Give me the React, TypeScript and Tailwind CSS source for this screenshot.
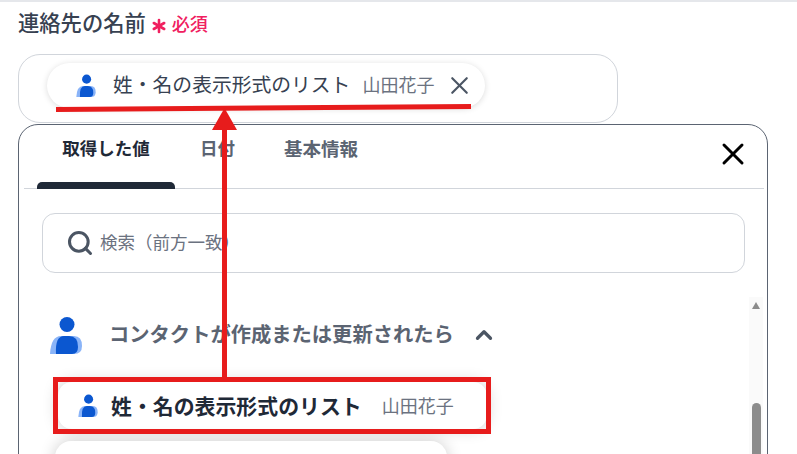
import { X, Search, ChevronUp, Asterisk } from "lucide-react";

function PersonIcon({ className }: { className: string }) {
  return (
    <svg viewBox="0 0 32 38" className={className}>
      <circle cx="17" cy="8.5" r="7.5" fill="#0b57d0" />
      <path d="M0 38 Q1 20 11 20 H24 Q32 20 32 30 Q32 38 24 38 Z" fill="#8ab4f8" />
      <path d="M6 38 Q5 20 14 20 H19 Q28 20 28 31 Q28 38 22 38 Z" fill="#0b57d0" />
    </svg>
  );
}

export default function App() {
  return (
    <div className="relative h-[454px] w-[797px] overflow-hidden border-t-2 border-[#e5e7eb] bg-white font-['Liberation_Sans','Noto_Sans_CJK_JP',sans-serif] text-[#374151]">
      <div className="flex h-[45px] items-center pl-[18px]">
        <span className="text-[21.3px] font-medium leading-none">連絡先の名前</span>
        <Asterisk className="ml-[1px] mt-[3px] h-[24px] w-[24px] text-[#f0205f]" strokeWidth={2.6} />
        <span className="ml-[1px] text-[18px] font-medium leading-none text-[#f0205f]">必須</span>
      </div>

      <div className="ml-[18px] mt-[7px] flex h-[69px] w-[600px] items-start rounded-[22px] border border-[#d1d5db] pl-[28px] pt-2">
        <div className="flex h-[45px] w-[438px] items-center rounded-full bg-white pl-[29px] shadow-[0_1px_6px_rgba(0,0,0,0.14)]">
          <PersonIcon className="h-[23px] w-[20px]" />
          <span className="ml-[17px] text-[19.8px] leading-none">姓・名の表示形式のリスト</span>
          <span className="ml-3 text-[18px] leading-none text-[#6b7280]">山田花子</span>
          <X className="ml-[11px] h-[29px] w-[29px] text-[#4b5563]" strokeWidth={1.8} />
        </div>
      </div>

      <div className="ml-[18px] mt-px h-[400px] w-[750px] rounded-t-[20px] border border-[#5b6472] pl-[5px] pr-[3px]">
        <div className="flex h-[64px] items-start justify-between border-b border-[#d1d5db] pr-[13px]">
          <div className="flex">
            <div className="ml-[13px] flex h-[64px] w-[138px] flex-col items-center justify-between">
              <span className="mt-[16px] text-[17.5px] font-bold leading-none text-[#1f2937]">取得した値</span>
              <span className="h-[7px] w-full rounded-t-[5px] bg-[#1f2937]" />
            </div>
            <span className="ml-[25px] mt-[16px] text-[17.5px] font-bold leading-none text-[#5b6472]">日付</span>
            <span className="ml-[49px] mt-[16px] text-[18.5px] font-bold leading-none text-[#5b6472]">基本情報</span>
          </div>
          <X className="mt-[11px] h-[36px] w-[36px] text-black" strokeWidth={2} />
        </div>

        <div className="ml-[18px] mt-[24px] flex h-[60px] w-[703px] items-center rounded-[13px] border border-[#d1d5db] pl-[23px]">
          <Search className="h-[28px] w-[28px] text-[#4b5563]" strokeWidth={2.6} />
          <span className="ml-[6px] mt-[2px] text-[17.5px] leading-none text-[#6b7280]">検索（前方一致）</span>
        </div>

        <div className="flex">
          <div className="w-[725px]">
            <div className="ml-[26px] mt-[43px] flex items-center">
              <PersonIcon className="h-[38px] w-[32px]" />
              <span className="ml-[27px] text-[20.3px] font-bold leading-none text-[#5b6472]">コンタクトが作成または更新されたら</span>
              <ChevronUp className="ml-[17px] h-[26px] w-[26px] text-[#4b5563]" strokeWidth={3} />
            </div>
            <div className="ml-[34px] mt-[28px] flex h-[47px] w-[429px] items-center rounded-[14px] bg-white pl-[20px] shadow-[0_0_16px_rgba(0,0,0,0.2)]">
              <PersonIcon className="h-[23px] w-[20px]" />
              <span className="ml-[13px] mt-[3px] text-[20.9px] font-bold leading-none text-[#1f2937]">姓・名の表示形式のリスト</span>
              <span className="ml-5 mt-[3px] text-[18px] leading-none text-[#6b7280]">山田花子</span>
            </div>
            <div className="ml-[31px] mt-[12px] h-[47px] w-[392px] rounded-[16px] bg-white shadow-[0_0_16px_rgba(0,0,0,0.2)]" />
          </div>
          <div className="mt-[24px] flex h-[200px] w-[14px] flex-col items-center bg-[#fafafa]">
            <span className="mt-[5px] h-0 w-0 border-x-[4.5px] border-b-[7px] border-x-transparent border-b-[#8c8c8c]" />
            <span className="mt-[94px] h-[60px] w-[9px] rounded-full bg-[#8c8c8c]" />
          </div>
        </div>
      </div>

      {/* 赤い注釈 */}
      <svg className="absolute -top-[2px] left-0 h-[454px] w-[797px]" viewBox="0 0 797 454">
        <path d="M56 109.5 L471 106.5" stroke="#e71c1c" strokeWidth="5" />
        <rect x="55.5" y="379.5" width="433" height="52" fill="none" stroke="#e71c1c" strokeWidth="5" />
        <path d="M224.5 128 V379" stroke="#e71c1c" strokeWidth="5" />
        <path d="M224.5 108 L237 130 H212 Z" fill="#e71c1c" />
      </svg>
    </div>
  );
}
